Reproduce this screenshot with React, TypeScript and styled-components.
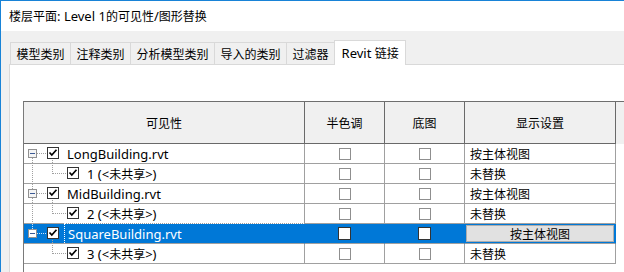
import styled, { createGlobalStyle } from 'styled-components'

type LinkRow = {
  name: string
  child: string
  selected?: boolean
}

const links: LinkRow[] = [
  { name: 'LongBuilding.rvt', child: '1 (<未共享>)' },
  { name: 'MidBuilding.rvt', child: '2 (<未共享>)' },
  { name: 'SquareBuilding.rvt', child: '3 (<未共享>)', selected: true },
]

const tabs = ['模型类别', '注释类别', '分析模型类别', '导入的类别', '过滤器', 'Revit 链接']

const GlobalStyle = createGlobalStyle`
  html, body {
    margin: 0;
    padding: 0;
    background: #fff;
  }
  body {
    font-family: "Noto Sans", "Noto Sans CJK SC", sans-serif;
    font-size: 12px;
    color: #000;
  }
`

// the latin part of a YaHei run reads a bit bigger than the CJK part
const Latin = styled.span`
  font-size: 13px;
`

const cjkRun = /([\u2e80-\u9fff\uff00-\uffef]+)/
const isCjk = /^[\u2e80-\u9fff\uff00-\uffef]+$/

const Mixed = ({ text }: { text: string }) => (
  <>
    {text.split(cjkRun).map((part, i) =>
      part === '' ? null : isCjk.test(part) ? part : <Latin key={i}>{part}</Latin>
    )}
  </>
)

const Window = styled.div`
  width: 624px;
  height: 272px;
  box-sizing: border-box;
  border-top: 1px solid #1883d7;
  border-left: 1px solid #1883d7;
  overflow: hidden;
  display: flex;
  flex-direction: column;
`

const TitleBar = styled.div`
  flex: none;
  height: 30px;
  display: flex;
  align-items: center;
  padding-left: 8px;
  background: #fff;
  white-space: pre;
`

const Body = styled.div`
  flex: 1;
  min-height: 0;
  background: #f0f0f0;
  padding: 9px 0 0 8px;
  display: flex;
  flex-direction: column;
`

const TabStrip = styled.div`
  flex: none;
  height: 24px;
  display: flex;
  align-items: flex-end;
  padding-left: 2px;
`

const Tab = styled.div<{ $active?: boolean }>`
  box-sizing: border-box;
  height: ${({ $active }) => ($active ? '25px' : '22px')};
  margin-left: -1px;
  margin-bottom: ${({ $active }) => ($active ? '-1px' : '0')};
  padding: 0 ${({ $active }) => ($active ? '6.5px' : '5.5px')};
  padding-bottom: ${({ $active }) => ($active ? '1px' : '0')};
  border: 1px solid #d9d9d9;
  border-bottom: none;
  background: ${({ $active }) => ($active ? '#fff' : '#f0f0f0')};
  position: relative;
  z-index: ${({ $active }) => ($active ? 1 : 0)};
  display: flex;
  align-items: center;
  white-space: pre;
`

const Panel = styled.div`
  flex: 1;
  min-height: 0;
  background: #fff;
  border-top: 1px solid #d9d9d9;
  border-left: 1px solid #d9d9d9;
  padding: 36px 0 0 13px;
  display: flex;
  flex-direction: column;
`

const Grid = styled.div`
  flex: 1;
  border-top: 1px solid #6e6e6e;
  border-left: 1px solid #7a7a7a;
  display: flex;
  flex-direction: column;
`

const Row = styled.div<{ $header?: boolean; $selected?: boolean }>`
  display: grid;
  grid-template-columns: 281px 80px 80px 151px 1fr;
  height: ${({ $header }) => ($header ? '42px' : '20px')};
  background: ${({ $header }) => ($header ? '#f0f0f0' : '#fff')};
  color: ${({ $selected }) => ($selected ? '#fff' : '#000')};
`

const Cell = styled.div<{ $header?: boolean; $selected?: boolean; $align?: 'left' | 'center' }>`
  box-sizing: border-box;
  display: flex;
  align-items: center;
  justify-content: ${({ $align }) => ($align === 'left' ? 'flex-start' : 'center')};
  padding-left: ${({ $align }) => ($align === 'left' ? '5px' : '0')};
  border-right: 1px solid ${({ $header, $selected }) => ($selected ? '#0078d7' : $header ? '#696969' : '#a0a0a0')};
  border-bottom: 1px solid ${({ $header }) => ($header ? '#696969' : '#a0a0a0')};
  background: ${({ $selected }) => ($selected ? '#0078d7' : 'transparent')};
  white-space: pre;
  min-width: 0;
`

const TreeCell = styled(Cell)`
  justify-content: flex-start;
  padding-left: 0;
`

const Filler = styled.div``

const Label = styled.span<{ $focus?: boolean }>`
  margin-left: ${({ $focus }) => ($focus ? '5px' : '8px')};
  padding-left: ${({ $focus }) => ($focus ? '3px' : '0')};
  border-left: ${({ $focus }) => ($focus ? '1px dotted #fff' : 'none')};
  border-top: ${({ $focus }) => ($focus ? '1px dotted #fff' : 'none')};
  align-self: ${({ $focus }) => ($focus ? 'stretch' : 'auto')};
  margin-top: ${({ $focus }) => ($focus ? '-1px' : '0')};
  flex: ${({ $focus }) => ($focus ? 1 : 'none')};
  display: flex;
  align-items: center;
  white-space: pre;
`

const Box = styled.span<{ $selected?: boolean }>`
  box-sizing: border-box;
  width: ${({ $selected }) => ($selected ? '13px' : '12px')};
  height: ${({ $selected }) => ($selected ? '13px' : '12px')};
  border: 1px solid ${({ $selected }) => ($selected ? '#333' : '#8f8f8f')};
  background: #fff;
`

const DisplayButton = styled.div`
  box-sizing: border-box;
  flex: 1;
  height: 17px;
  margin: 0 1px 0 -4px;
  background: #e1e1e1;
  border: 1px solid #adadad;
  color: #000;
  display: flex;
  align-items: center;
  justify-content: center;
`

const Glyph = styled.svg`
  flex: none;
  overflow: visible;
  display: block;
`

type GlyphProps = {
  level: 0 | 1
  first?: boolean
  last?: boolean
  parentLast?: boolean
  selected?: boolean
}

const Dotted = ({ x1, y1, x2, y2, color }: { x1: number; y1: number; x2: number; y2: number; color: string }) => (
  <line x1={x1} y1={y1} x2={x2} y2={y2} stroke={color} strokeWidth={1} strokeDasharray="1 1" shapeRendering="crispEdges" />
)

const CheckGlyph = ({ x, y }: { x: number; y: number }) => (
  <g>
    <rect x={x + 0.5} y={y + 0.5} width={11} height={11} fill="#fff" stroke="#333" shapeRendering="crispEdges" />
    <path d={`M${x + 2.5} ${y + 5.5} L${x + 4.8} ${y + 8} L${x + 9.5} ${y + 2.8}`} fill="none" stroke="#000" strokeWidth={1.7} />
  </g>
)

const TreeGlyph = ({ level, first, last, parentLast, selected }: GlyphProps) => {
  const color = selected ? '#cfe3f7' : '#a0a0a0'
  if (level === 0) {
    return (
      <Glyph width={35} height={19} viewBox="0 0 35 19">
        {!first && <Dotted x1={8.5} y1={0} x2={8.5} y2={5} color={color} />}
        {!last && <Dotted x1={8.5} y1={14} x2={8.5} y2={20} color={color} />}
        <Dotted x1={13} y1={9.5} x2={23} y2={9.5} color={color} />
        <Dotted x1={28.5} y1={16} x2={28.5} y2={20} color="#a0a0a0" />
        <rect x={4.5} y={5.5} width={8} height={8} fill={selected ? '#fff' : '#f4f4f4'} stroke="#919191" shapeRendering="crispEdges" />
        <line x1={6} y1={9.5} x2={11} y2={9.5} stroke="#3b5a95" strokeWidth={1} shapeRendering="crispEdges" />
        <CheckGlyph x={23} y={3} />
      </Glyph>
    )
  }
  return (
    <Glyph width={55} height={19} viewBox="0 0 55 19">
      {!parentLast && <Dotted x1={8.5} y1={-1} x2={8.5} y2={20} color={color} />}
      <Dotted x1={28.5} y1={-1} x2={28.5} y2={last ? 9.5 : 20} color={color} />
      <Dotted x1={29} y1={9.5} x2={43} y2={9.5} color={color} />
      <CheckGlyph x={43} y={3} />
    </Glyph>
  )
}

const HeaderRow = () => (
  <Row $header>
    <Cell $header>可见性</Cell>
    <Cell $header>半色调</Cell>
    <Cell $header>底图</Cell>
    <Cell $header>显示设置</Cell>
    <Filler />
  </Row>
)

type LinkRowProps = {
  item: LinkRow
  index: number
  count: number
}

const LinkRows = ({ item, index, count }: LinkRowProps) => {
  const sel = item.selected
  const isLast = index === count - 1
  return (
    <>
      <Row $selected={sel}>
        <TreeCell $selected={sel}>
          <TreeGlyph level={0} first={index === 0} last={isLast} selected={sel} />
          <Label $focus={sel}><Mixed text={item.name} /></Label>
        </TreeCell>
        <Cell $selected={sel}><Box $selected={sel} /></Cell>
        <Cell $selected={sel}><Box $selected={sel} /></Cell>
        <Cell $selected={sel} $align="left">
          {sel ? <DisplayButton>按主体视图</DisplayButton> : '按主体视图'}
        </Cell>
        <Filler />
      </Row>
      <Row>
        <TreeCell>
          <TreeGlyph level={1} last parentLast={isLast} />
          <Label><Mixed text={item.child} /></Label>
        </TreeCell>
        <Cell><Box /></Cell>
        <Cell><Box /></Cell>
        <Cell $align="left">未替换</Cell>
        <Filler />
      </Row>
    </>
  )
}

export default function App() {
  return (
    <>
      <GlobalStyle />
      <Window>
        <TitleBar><Mixed text="楼层平面: Level 1的可见性/图形替换" /></TitleBar>
        <Body>
          <TabStrip>
            {tabs.map((t, i) => (
              <Tab key={t} $active={i === tabs.length - 1}><Mixed text={t} /></Tab>
            ))}
          </TabStrip>
          <Panel>
            <Grid>
              <HeaderRow />
              {links.map((item, i) => (
                <LinkRows key={item.name} item={item} index={i} count={links.length} />
              ))}
            </Grid>
          </Panel>
        </Body>
      </Window>
    </>
  )
}
